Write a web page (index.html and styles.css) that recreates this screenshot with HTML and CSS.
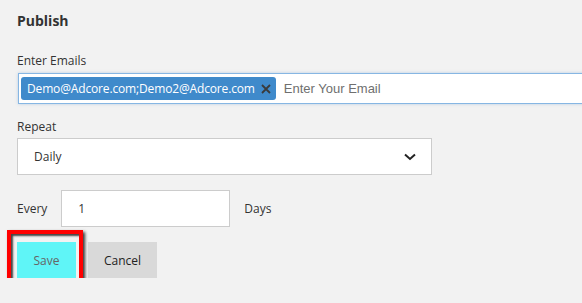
FILE: index.html
```html
<!DOCTYPE html>
<html lang="en">
<head>
	<meta charset="UTF-8">
	<title>Publish</title>
	<link rel="stylesheet" href="styles.css">
</head>
<body>
	<div class="panel">
		<h2 class="title">Publish</h2>

		<label class="label">Enter Emails</label>
		<div class="emails">
			<span class="tag">Demo@Adcore.com;Demo2@Adcore.com
				<svg class="tag-x" width="10" height="10" viewBox="0 0 10 10">
					<path d="M1 1 L9 9 M9 1 L1 9" stroke="#3a3a3a" stroke-width="1.8"/>
				</svg>
			</span>
			<span class="placeholder">Enter Your Email</span>
		</div>

		<label class="label">Repeat</label>
		<div class="select">
			<span>Daily</span>
			<svg class="chev" width="12" height="8" viewBox="0 0 12 8">
				<path d="M1 1.5 L6 6 L11 1.5" fill="none" stroke="#222" stroke-width="2"/>
			</svg>
		</div>

		<div class="every">
			<span>Every</span>
			<div class="num">1</div>
			<span>Days</span>
		</div>

		<div class="buttons">
			<div class="save-wrap">
				<button class="btn save">Save</button>
				<span class="mark"></span>
			</div>
			<button class="btn cancel">Cancel</button>
		</div>
	</div>
</body>
</html>
```

FILE: styles.css
```css
body {
	margin: 0;
	background: #f2f2f2;
	font-family: "Open Sans", "Noto Sans", sans-serif;
	color: #333;
	overflow: hidden;
}
.panel {
	padding: 11px 0 0 17px;
	display: flex;
	flex-direction: column;
	align-items: flex-start;
}
.title {
	margin: 0;
	font-size: 14px;
	line-height: 20px;
	font-weight: 700;
	color: #333;
}
.label {
	font-size: 12px;
	line-height: 16px;
	color: #333;
	margin-top: 22px;
}
.emails {
	margin-top: 4px;
	margin-left: 1px;
	width: 600px;
	height: 29px;
	background: #fff;
	border: 1px solid #86b6e3;
	box-shadow: 0 0 3px rgba(90,150,210,0.35);
	display: flex;
	align-items: center;
	padding-left: 2px;
}
.tag {
	background: #3f8acb;
	color: #fff;
	font-size: 12px;
	letter-spacing: -0.15px;
	height: 23px;
	line-height: 23px;
	border-radius: 3px;
	padding: 0 5px 0 6px;
	display: flex;
	align-items: center;
}
.tag-x {
	margin-left: 6px;
}
.placeholder {
	font-family: "Liberation Sans", Arial, sans-serif;
	font-size: 13px;
	color: #6f6f6f;
	margin-left: 8px;
}
.emails + .label {
	margin-top: 15px;
}
.select {
	margin-top: 3px;
	width: 382px;
	height: 35px;
	background: #fff;
	border: 1px solid #ccc;
	display: flex;
	align-items: center;
	justify-content: space-between;
	padding: 0 15px 0 16px;
	font-size: 12px;
	color: #333;
}
.every {
	margin-top: 15px;
	display: flex;
	align-items: center;
	font-size: 12px;
	color: #333;
}
.num {
	margin: 0 14px 0 14px;
	width: 151px;
	height: 35px;
	line-height: 35px;
	background: #fff;
	border: 1px solid #ccc;
	padding-left: 16px;
}
.buttons {
	margin-top: 15px;
	display: flex;
	gap: 12px;
}
.btn {
	border: 0;
	height: 36px;
	font-family: inherit;
	font-size: 12px;
	padding: 0;
}
.save-wrap {
	position: relative;
}
.save {
	width: 59px;
	background: #5ff5f7;
	color: #666;
}
.cancel {
	width: 69px;
	background: #d9d9d9;
	color: #222;
}
.mark {
	position: absolute;
	left: -10px;
	top: -12px;
	right: -7px;
	bottom: -9px;
	border: 4px solid #ff0000;
	box-shadow: 2px 2px 3px #333, inset 2px 2px 2px #444;
}
```
